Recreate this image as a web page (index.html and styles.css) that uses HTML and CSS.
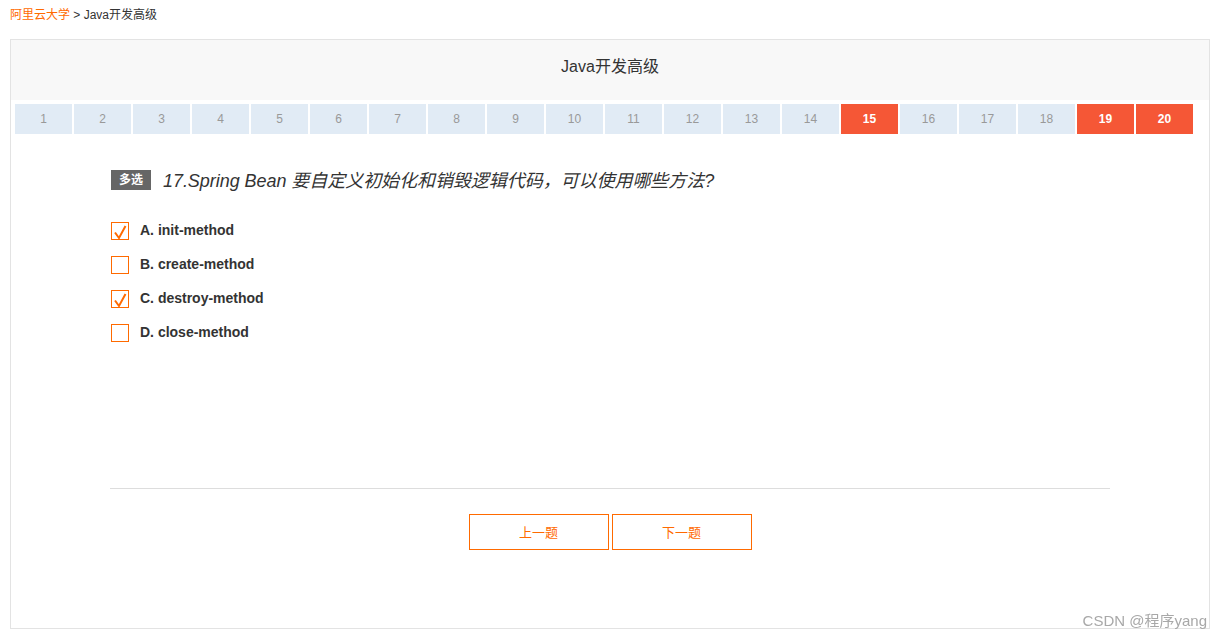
FILE: index.html
```html
<!DOCTYPE html>
<html lang="zh-CN">
<head>
    <meta charset="UTF-8">
    <title>Java开发高级</title>
    <link rel="stylesheet" href="styles.css">
</head>
<body>
    <div class="crumb"><a href="#">阿里云大学</a> &gt; Java开发高级</div>
    <div class="exam">
        <div class="exam-title">Java开发高级</div>
        <div class="nav">
            <span class="num">1</span>
            <span class="num">2</span>
            <span class="num">3</span>
            <span class="num">4</span>
            <span class="num">5</span>
            <span class="num">6</span>
            <span class="num">7</span>
            <span class="num">8</span>
            <span class="num">9</span>
            <span class="num">10</span>
            <span class="num">11</span>
            <span class="num">12</span>
            <span class="num">13</span>
            <span class="num">14</span>
            <span class="num done">15</span>
            <span class="num">16</span>
            <span class="num">17</span>
            <span class="num">18</span>
            <span class="num done">19</span>
            <span class="num done">20</span>
        </div>
        <div class="content">
            <div class="question-body">
                <div class="question">
                    <span class="tag">多选</span>
                    <span class="q-text">17.Spring Bean 要自定义初始化和销毁逻辑代码，可以使用哪些方法?</span>
                </div>
                <ul class="options">
                    <li class="option"><span class="box"><svg viewBox="0 0 18 18" width="18" height="18"><path d="M4 9.5 L8 15 L14.5 3" fill="none" stroke="#ff6a00" stroke-width="2"/></svg></span><span class="label">A. init-method</span></li>
                    <li class="option"><span class="box"></span><span class="label">B. create-method</span></li>
                    <li class="option"><span class="box"><svg viewBox="0 0 18 18" width="18" height="18"><path d="M4 9.5 L8 15 L14.5 3" fill="none" stroke="#ff6a00" stroke-width="2"/></svg></span><span class="label">C. destroy-method</span></li>
                    <li class="option"><span class="box"></span><span class="label">D. close-method</span></li>
                </ul>
            </div>
            <div class="actions">
                <a class="btn" href="#">上一题</a>
                <a class="btn" href="#">下一题</a>
            </div>
        </div>
    </div>
    <div class="watermark">CSDN @程序yang</div>
</body>
</html>
```

FILE: styles.css
```css
body {
    margin: 0;
    padding: 0;
    font-family: 'Liberation Sans', Arial, 'Noto Sans CJK SC', sans-serif;
    color: #333333;
    background: #ffffff;
}
.crumb {
    height: 39px;
    line-height: 30px;
    padding: 0 10px;
    font-size: 12px;
    color: #333333;
}
.crumb a {
    color: #ff6a00;
    text-decoration: none;
}
.exam {
    width: 1200px;
    height: 590px;
    margin-left: 10px;
    border: 1px solid #e3e3e3;
    box-sizing: border-box;
}
.exam-title {
    height: 60px;
    line-height: 54px;
    background: #f8f8f8;
    text-align: center;
    font-size: 16px;
    color: #333333;
}
.nav {
    display: flex;
    gap: 2px;
    padding: 4px 0 0 4px;
}
.num {
    width: 57px;
    height: 30px;
    line-height: 30px;
    text-align: center;
    font-size: 12px;
    color: #999999;
    background: #e1ebf5;
}
.num.done {
    background: #f55736;
    color: #ffffff;
    font-weight: bold;
}
.content {
    width: 1000px;
    margin: 36px auto 0;
}
.question-body {
    height: 319px;
    border-bottom: 1px solid #dddddd;
    box-sizing: border-box;
    padding-left: 1px;
}
.question {
    display: flex;
    align-items: center;
    height: 20px;
}
.tag {
    width: 40px;
    height: 20px;
    line-height: 20px;
    text-align: center;
    background: #666666;
    color: #ffffff;
    font-size: 12px;
    font-weight: bold;
    margin-right: 12px;
}
.q-text {
    font-size: 18px;
    font-style: italic;
    letter-spacing: -0.05px;
    color: #333333;
    margin-top: -3px;
}
.options {
    list-style: none;
    margin: 32px 0 0;
    padding: 0;
}
.option {
    display: flex;
    align-items: center;
    height: 18px;
    margin-bottom: 16px;
    font-size: 14px;
    font-weight: bold;
    color: #333333;
}
.option .label {
    margin-top: -3px;
}
.box {
    width: 18px;
    height: 18px;
    border: 1px solid #ff6a00;
    box-sizing: border-box;
    margin-right: 11px;
    position: relative;
}
.box svg {
    position: absolute;
    left: -1px;
    top: 0;
}
.actions {
    display: flex;
    justify-content: center;
    gap: 3px;
    margin-top: 25px;
}
.btn {
    width: 140px;
    height: 36px;
    line-height: 36px;
    box-sizing: border-box;
    border: 1px solid #ff6a00;
    text-align: center;
    font-size: 13px;
    color: #ff6a00;
    text-decoration: none;
}
.watermark {
    position: fixed;
    right: 15px;
    bottom: 9px;
    font-size: 15px;
    color: #a8a8a8;
}
```
